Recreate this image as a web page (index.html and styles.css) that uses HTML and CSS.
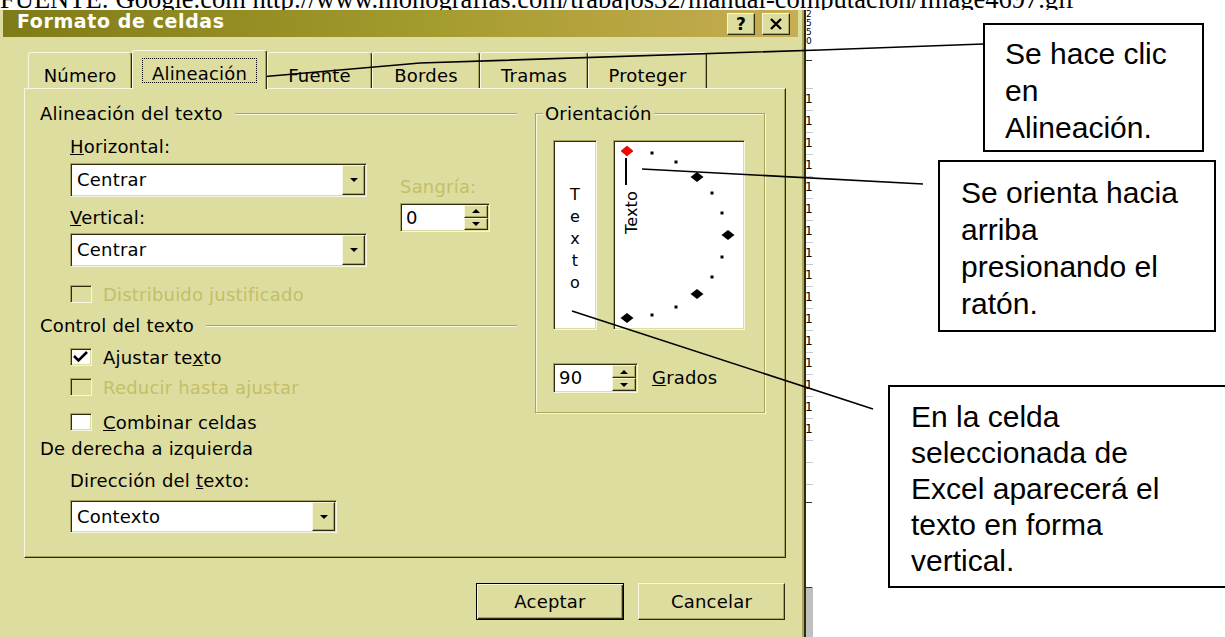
FILE: index.html
```html
<!DOCTYPE html>
<html>
<head>
    <meta charset="utf-8">
    <title>Formato de celdas</title>
    <link rel="stylesheet" href="styles.css">
</head>
<body>

<div class="source"><span>FUENTE: Google.com http://www.monografias.com/trabajos32/manual-computacion/Image4697.gif</span></div>

<div class="stage">
    <div class="dialog">
        <div class="titlebar">
            <span class="title">Formato de celdas</span>
            <span class="cbtn">?</span>
            <span class="cbtn"><svg width="14" height="12" viewBox="0 0 14 12"><path d="M2 1 L12 11 M12 1 L2 11" stroke="#000" stroke-width="2.4" fill="none"/></svg></span>
        </div>

        <div class="dialog-body">
            <div class="tabs">
                <div class="tab w-num">Número</div>
                <div class="tab active w-ali"><span class="focus">Alineación</span></div>
                <div class="tab w-fue">Fuente</div>
                <div class="tab w-bor">Bordes</div>
                <div class="tab w-tra">Tramas</div>
                <div class="tab w-pro">Proteger</div>
            </div>

            <div class="panel">
                <div class="col-left">
                    <div class="legend-row"><span>Alineación del texto</span><i class="etch"></i></div>
                    <div class="align-grid">
                        <div class="align-main">
                            <div class="lbl m-horiz"><u>H</u>orizontal:</div>
                            <div class="combo sunken wide m-combo1"><span class="val">Centrar</span><span class="drop raised"><i class="tri-down"></i></span></div>
                            <div class="lbl m-vert"><u>V</u>ertical:</div>
                            <div class="combo sunken wide m-combo2"><span class="val">Centrar</span><span class="drop raised"><i class="tri-down"></i></span></div>
                        </div>
                        <div class="indent">
                            <div class="lbl disabled">Sangría:</div>
                            <div class="spin sunken s-indent">
                                <span class="val">0</span>
                                <span class="spin-btns"><span class="raised"><i class="tri-up"></i></span><span class="raised"><i class="tri-down"></i></span></span>
                            </div>
                        </div>
                    </div>
                    <div class="check-row disabled m-dist"><span class="box sunken"></span>Distribuido justificado</div>

                    <div class="legend-row m-control"><span>Control del texto</span><i class="etch"></i></div>
                    <div class="check-row m-ajust"><span class="box sunken"><svg width="20" height="16" viewBox="0 0 20 16"><path d="M3 7 L7.5 11.5 L16 3" stroke="#000" stroke-width="2.6" fill="none"/></svg></span>Ajustar te<u>x</u>to</div>
                    <div class="check-row disabled m-reduc"><span class="box sunken"></span>Reducir hasta ajustar</div>
                    <div class="check-row m-comb"><span class="box sunken"></span><u>C</u>ombinar celdas</div>

                    <div class="legend-row m-rtl"><span>De derecha a izquierda</span></div>
                    <div class="lbl indented m-dir">Dirección del <u>t</u>exto:</div>
                    <div class="combo sunken narrow indented m-combo3"><span class="val">Contexto</span><span class="drop raised"><i class="tri-down"></i></span></div>
                </div>

                <div class="col-right">
                    <div class="group">
                        <span class="group-title">Orientación</span>
                        <div class="orient-boxes">
                            <div class="vtext sunken"><span>T</span><span>e</span><span>x</span><span>t</span><span>o</span></div>
                            <div class="dial sunken">
                                <svg width="130" height="188" viewBox="0 0 130 188">
                                    <rect x="11" y="17" width="2" height="27" fill="#000"/>
                                    <text transform="translate(23,71.5) rotate(-90)" text-anchor="middle" font-family="DejaVu Sans, sans-serif" font-size="16">Texto</text>
                                    <polygon points="13,5 19,10 13,15 7,10" fill="#f00" stroke="#a00" stroke-width="0.6"/>
                                    <polygon points="83,31 89.5,36 83,41 76.5,36" fill="#000"/>
                                    <polygon points="114,89 120.5,94 114,99 107.5,94" fill="#000"/>
                                    <polygon points="83,148 89.5,153 83,158 76.5,153" fill="#000"/>
                                    <polygon points="13,172 19.5,177 13,182 6.5,177" fill="#000"/>
                                    <rect x="36.5" y="10.5" width="3" height="3"/>
                                    <rect x="60.5" y="19.5" width="3" height="3"/>
                                    <rect x="96.5" y="50.5" width="3" height="3"/>
                                    <rect x="106.5" y="70.5" width="3" height="3"/>
                                    <rect x="106.5" y="114.5" width="3" height="3"/>
                                    <rect x="96.5" y="134.5" width="3" height="3"/>
                                    <rect x="60.5" y="164.5" width="3" height="3"/>
                                    <rect x="36.5" y="172.5" width="3" height="3"/>
                                </svg>
                            </div>
                        </div>
                        <div class="degrees">
                            <div class="spin sunken s-deg">
                                <span class="val">90</span>
                                <span class="spin-btns"><span class="raised"><i class="tri-up"></i></span><span class="raised"><i class="tri-down"></i></span></span>
                            </div>
                            <span class="lbl deg-lbl"><u>G</u>rados</span>
                        </div>
                    </div>
                </div>
            </div>

            <div class="buttons">
                <div class="btn default w-ok">Aceptar</div>
                <div class="btn w-cancel">Cancelar</div>
            </div>
        </div>
    </div>

    <div class="sheet">
        <div class="sheet-head"><span>2</span><span>5</span><span>5</span><span>0</span><i class="tick t-head"></i></div>
        <div class="cell">1</div>
        <div class="cell">1</div>
        <div class="cell">1</div>
        <div class="cell">1</div>
        <div class="cell">1</div>
        <div class="cell">1</div>
        <div class="cell">1</div>
        <div class="cell">1</div>
        <div class="cell">1</div>
        <div class="cell">1</div>
        <div class="cell">1</div>
        <div class="cell">1</div>
        <div class="cell">1</div>
        <div class="cell">1</div>
        <div class="cell">1</div>
        <div class="cell">1</div>
        <div class="cell"></div>
        <div class="cell"></div>
        <div class="sheet-gap"><i class="tick t-gap"></i></div>
        <div class="sheet-grey"><i class="tick t-grey"></i></div>
    </div>
</div>

<!-- annotations drawn over the screenshot -->
<div class="notes">
    <svg class="leaders" width="1225" height="637" viewBox="0 0 1225 637">
        <polyline points="213,81 420,63 820,50 983,44" fill="none" stroke="#000" stroke-width="1.6"/>
        <line x1="642" y1="169" x2="923" y2="184" stroke="#000" stroke-width="1.6"/>
        <line x1="572" y1="311" x2="873" y2="409" stroke="#000" stroke-width="1.6"/>
    </svg>
    <div class="callout c1">Se hace clic<br>en<br>Alineación.</div>
    <div class="callout c2">Se orienta hacia<br>arriba<br>presionando el<br>ratón.</div>
    <div class="callout c3">En la celda<br>seleccionada de<br>Excel aparecerá el<br>texto en forma<br>vertical.</div>
</div>

</body>
</html>
```

FILE: styles.css
```css
* {
    box-sizing: border-box;
}
html, body {
    margin: 0;
    height: 637px;
    overflow: hidden;
    background: #fff;
}
body {
    position: relative;
    font-family: "DejaVu Sans", Verdana, sans-serif;
    font-size: 18px;
    letter-spacing: 0.2px;
    color: #000;
}

/* caption of the picture, cut off at the top */
.source {
    height: 10px;
    overflow: hidden;
    font-family: "Liberation Serif", "Times New Roman", serif;
    font-size: 26.5px;
    line-height: 27px;
    letter-spacing: 0;
    white-space: nowrap;
}
.source span {
    display: block;
    margin-top: -14px;
}

.stage {
    display: flex;
    height: 627px;
}

/* dialog window */
.dialog {
    flex: none;
    width: 806px;
    height: 627px;
    background: #dedda0;
    padding: 0 6px 0 3px;
    border-right: 2px solid #2e2c0c;
    box-shadow: inset -2px 0 0 #a9a55c;
}
.titlebar {
    height: 27px;
    display: flex;
    align-items: center;
    padding: 0 8px 0 14px;
    background: linear-gradient(to right, #7f7b17, #a59c2e 55%, #c7ad54);
}
.title {
    align-self: flex-start;
    margin-right: auto;
    line-height: 23px;
    font-size: 19px;
    font-weight: bold;
    letter-spacing: 0.6px;
    color: #fff;
}
.cbtn {
    width: 28px;
    height: 22px;
    display: flex;
    align-items: center;
    justify-content: center;
    background: #dedda0;
    border: 1px solid;
    border-color: #f7f6de #2e2c0c #2e2c0c #f7f6de;
    box-shadow: inset -1px -1px 0 #a9a55c;
    font-size: 17px;
    font-weight: bold;
}
.cbtn + .cbtn {
    margin-left: 7px;
}

.dialog-body {
    padding: 13px 12px 0 21px;
}

/* tabs */
.tabs {
    display: flex;
    align-items: flex-end;
    height: 38px;
    padding-left: 4px;
}
.tab {
    flex: none;
    height: 36px;
    padding: 12px 0 1px;
    line-height: 22px;
    text-align: center;
    border: 1px solid;
    border-bottom: 0;
    border-color: #f7f6de #2e2c0c #f7f6de #f7f6de;
    border-radius: 3px 3px 0 0;
    box-shadow: inset -1px 0 0 #a9a55c;
}
.tab.active {
    position: relative;
    z-index: 1;
    height: 39px;
    margin-bottom: -1px;
    padding: 7px 0 0;
    background: #dedda0;
    display: flex;
    justify-content: center;
    align-items: flex-start;
}
.focus {
    border: 1px dotted #000;
    padding: 7px 9px 0;
    line-height: 16px;
}
.w-num { width: 104px; }
.w-ali { width: 135px; }
.w-fue { width: 105px; }
.w-bor { width: 108px; }
.w-tra { width: 108px; }
.w-pro { width: 119px; }

/* tab page */
.panel {
    height: 470px;
    display: flex;
    align-items: flex-start;
    padding: 13px 0 0 15px;
    border: 1px solid;
    border-color: #f7f6de #2e2c0c #2e2c0c #f7f6de;
    box-shadow: inset -1px -1px 0 #a9a55c;
}
.col-left {
    flex: none;
    width: 477px;
    margin-right: 18px;
}
.col-right {
    flex: none;
    width: 230px;
    margin-top: 11px;
}

.legend-row {
    display: flex;
    align-items: center;
    line-height: 24px;
}
.etch {
    flex: 1;
    margin-left: 12px;
    border-top: 1px solid #a9a55c;
    border-bottom: 1px solid #f7f6de;
}
.lbl {
    line-height: 24px;
}
.disabled {
    color: #c3bf67;
}
.indented {
    margin-left: 30px;
}

.align-grid {
    display: flex;
    margin-left: 30px;
}
.align-main {
    width: 297px;
    margin-right: 33px;
}
.indent {
    padding-top: 49px;
}
.m-horiz { margin-top: 9px; }
.m-combo1 { margin-top: 4px; }
.m-vert { margin-top: 9px; }
.m-combo2 { margin-top: 3px; }
.m-dist { margin-top: 15px; }
.m-control { margin-top: 8px; }
.m-ajust { margin-top: 7px; }
.m-reduc { margin-top: 6px; }
.m-comb { margin-top: 11px; }
.m-rtl { margin-top: 3px; }
.m-dir { margin-top: 8px; }
.m-combo3 { margin-top: 7px; }

/* 3d borders */
.sunken {
    border: 1px solid;
    border-color: #a9a55c #f7f6de #f7f6de #a9a55c;
    box-shadow: inset 1px 1px 0 #2e2c0c, inset -1px -1px 0 #dedda0;
    background: #fff;
}
.raised {
    border: 1px solid;
    border-color: #f7f6de #2e2c0c #2e2c0c #f7f6de;
    box-shadow: inset -1px -1px 0 #a9a55c;
    background: #dedda0;
}

/* combo boxes */
.combo {
    display: flex;
    padding: 1px;
}
.combo.wide {
    width: 297px;
    height: 34px;
}
.combo.narrow {
    width: 267px;
    height: 33px;
}
.combo .val {
    flex: 1;
    padding-left: 5px;
    line-height: 30px;
}
.combo.narrow .val {
    line-height: 29px;
}
.drop {
    width: 23px;
    display: flex;
    align-items: center;
    justify-content: center;
}
.tri-down, .tri-up {
    width: 0;
    height: 0;
    border-left: 4px solid transparent;
    border-right: 4px solid transparent;
}
.tri-down {
    border-top: 4px solid #000;
}
.tri-up {
    border-bottom: 4px solid #000;
}

/* spinners */
.spin {
    display: flex;
    padding: 1px;
}
.s-indent {
    width: 90px;
    height: 29px;
    margin-top: 4px;
}
.s-deg {
    width: 85px;
    height: 30px;
}
.spin .val {
    flex: 1;
    padding-left: 4px;
    line-height: 25px;
}
.s-deg .val {
    line-height: 26px;
}
.spin-btns {
    width: 24px;
    display: flex;
    flex-direction: column;
}
.spin-btns .raised {
    flex: 1;
    display: flex;
    align-items: center;
    justify-content: center;
}

/* check boxes */
.check-row {
    display: flex;
    align-items: center;
    height: 24px;
    margin-left: 30px;
}
.box {
    width: 22px;
    height: 18px;
    margin-right: 11px;
    display: flex;
}
.check-row.disabled .box {
    background: #dedda0;
}

/* orientation group */
.group {
    border: 1px solid #a9a55c;
    box-shadow: inset 1px 1px 0 #f7f6de, 1px 1px 0 #f7f6de;
    padding-bottom: 19px;
}
.group-title {
    display: block;
    width: max-content;
    margin: -12px 0 0 7px;
    padding: 0 2px;
    line-height: 24px;
    background: #dedda0;
}
.orient-boxes {
    display: flex;
    margin: 14px 0 0 17px;
}
.vtext {
    width: 44px;
    height: 190px;
    margin-right: 16px;
    padding-top: 43px;
    display: flex;
    flex-direction: column;
    align-items: center;
    font-size: 16px;
    line-height: 22px;
}
.dial {
    width: 132px;
    height: 190px;
}
.dial svg {
    display: block;
}
.degrees {
    display: flex;
    align-items: center;
    margin: 33px 0 0 17px;
}
.deg-lbl {
    margin-left: 14px;
}

/* buttons */
.buttons {
    display: flex;
    justify-content: flex-end;
    gap: 14px;
    margin-top: 25px;
    padding-right: 1px;
}
.btn {
    height: 37px;
    line-height: 35px;
    text-align: center;
    border: 1px solid;
    border-color: #f7f6de #2e2c0c #2e2c0c #f7f6de;
    box-shadow: inset -1px -1px 0 #a9a55c;
}
.btn.default {
    border-color: #000;
    box-shadow: inset 1px 1px 0 #f7f6de, inset -1px -1px 0 #2e2c0c, inset -2px -2px 0 #a9a55c;
}
.w-ok { width: 148px; }
.w-cancel { width: 147px; }

/* sliver of the worksheet behind the dialog */
.sheet {
    flex: none;
    width: 7px;
    overflow: hidden;
    font-size: 12px;
    letter-spacing: 0;
}
.sheet-head {
    height: 78px;
    display: flex;
    flex-direction: column;
    font-size: 9px;
    line-height: 9px;
}
.cell {
    height: 22px;
    border-top: 1px solid #c8c8c8;
    line-height: 21px;
    margin-left: -1px;
}
.sheet-gap {
    height: 41px;
    border-top: 1px solid #c8c8c8;
}
.sheet-grey {
    height: 112px;
    background: #c0c0c0;
}
.tick {
    display: block;
    width: 6px;
    height: 1px;
    background: #333;
}
.t-head { margin-top: 14px; }
.t-gap { margin-top: 17px; }
.t-grey { margin-top: 62px; }

/* annotations */
.notes {
    position: absolute;
    left: 0;
    top: 0;
    width: 1225px;
    height: 637px;
}
.leaders {
    position: absolute;
    left: 0;
    top: 0;
}
.callout {
    position: absolute;
    border: 2px solid #000;
    background: #fff;
    font-family: "Liberation Sans", Arial, sans-serif;
    font-size: 30px;
    line-height: 37px;
    letter-spacing: 0;
    white-space: nowrap;
}
.c1 {
    left: 983px;
    top: 23px;
    width: 221px;
    height: 129px;
    padding: 10px 0 0 20px;
}
.c2 {
    left: 938px;
    top: 160px;
    width: 278px;
    height: 172px;
    padding: 12px 0 0 21px;
}
.c3 {
    left: 888px;
    top: 385px;
    width: 350px;
    height: 203px;
    padding: 12px 0 0 21px;
    line-height: 36px;
}
```
